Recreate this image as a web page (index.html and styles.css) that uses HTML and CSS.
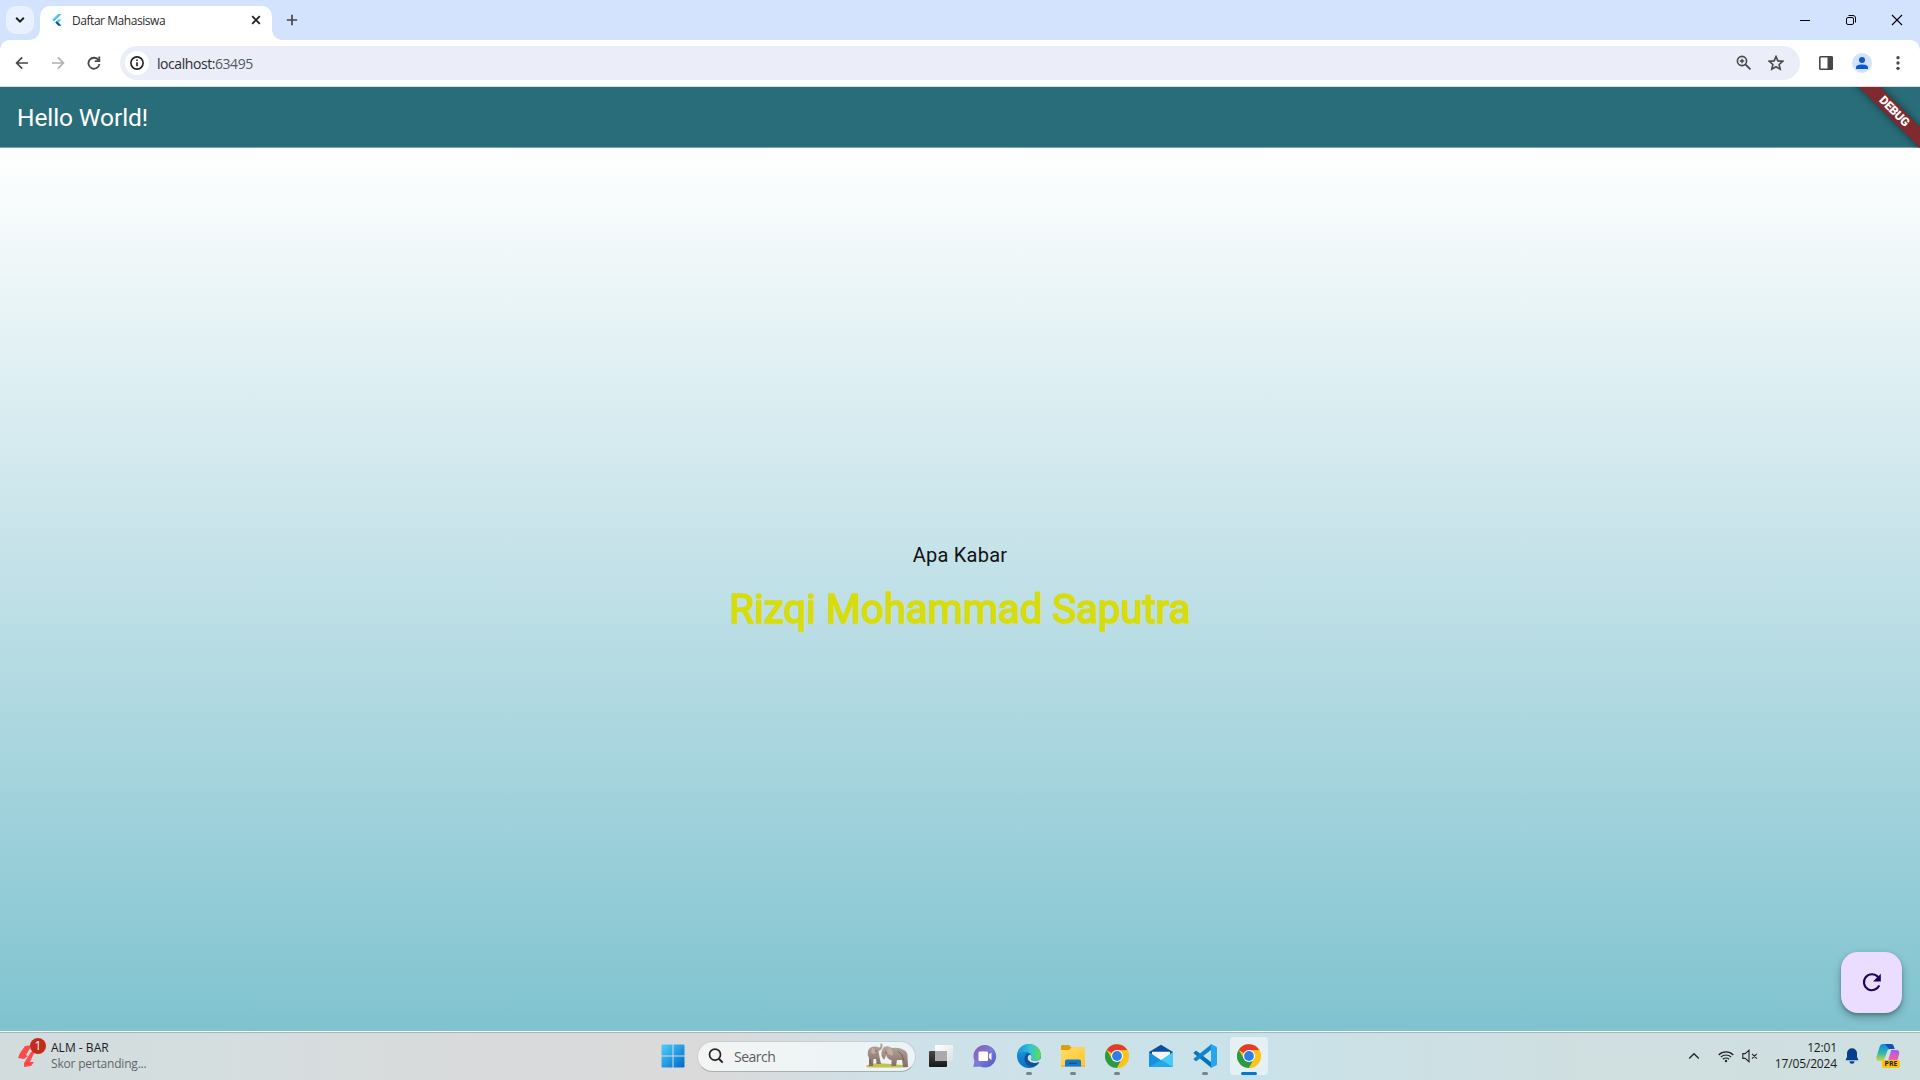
FILE: index.html
```html
<!DOCTYPE html>
<html lang="id">
<head>
<meta charset="utf-8">
<title>Daftar Mahasiswa</title>
<link rel="stylesheet" href="styles.css">
</head>
<body>
<svg class="defs" width="0" height="0">
  <defs>
    <linearGradient id="win" x1="0" y1="0" x2="1" y2="1"><stop offset="0" stop-color="#4fd0fb"/><stop offset="1" stop-color="#0068c8"/></linearGradient>
    <linearGradient id="edgeTop" x1="0" y1="0" x2="1" y2="0"><stop offset="0" stop-color="#1a94dc"/><stop offset=".55" stop-color="#35c3d8"/><stop offset="1" stop-color="#62e03f"/></linearGradient>
    <linearGradient id="edgeBody" x1="0" y1="0" x2="0" y2="1"><stop offset="0" stop-color="#1b9de2"/><stop offset="1" stop-color="#0b72c4"/></linearGradient>
    <linearGradient id="teams" x1="0" y1="0" x2="1" y2="1"><stop offset="0" stop-color="#8f58b5"/><stop offset=".5" stop-color="#7a7bd8"/><stop offset="1" stop-color="#5054be"/></linearGradient>
    <linearGradient id="folder" x1="0" y1="0" x2="1" y2="1"><stop offset="0" stop-color="#ffdc6b"/><stop offset="1" stop-color="#ffc42e"/></linearGradient>
    <linearGradient id="pilotA" x1="0" y1="0" x2="0" y2="1"><stop offset="0" stop-color="#1787e8"/><stop offset=".5" stop-color="#27b6b0"/><stop offset="1" stop-color="#d9d335"/></linearGradient>
    <linearGradient id="pilotB" x1="0" y1="0" x2="0" y2="1"><stop offset="0" stop-color="#a45cf0"/><stop offset=".6" stop-color="#ee5fa8"/><stop offset="1" stop-color="#ff9a62"/></linearGradient>
    <linearGradient id="dark" x1="0" y1="0" x2="0" y2="1"><stop offset="0" stop-color="#474747"/><stop offset="1" stop-color="#181818"/></linearGradient>
    <linearGradient id="pale" x1="0" y1="0" x2="1" y2="1"><stop offset="0" stop-color="#fff"/><stop offset="1" stop-color="#e0e0e0"/></linearGradient>
    <linearGradient id="hide" x1="0" y1="0" x2="0" y2="1"><stop offset="0" stop-color="#b9a69b"/><stop offset="1" stop-color="#826d64"/></linearGradient>
    <symbol id="chrome" viewBox="0 0 24 24">
      <circle cx="12" cy="12" r="12" fill="#fbc116"/>
      <path d="M12 12 1.6 6A12 12 0 0 1 22.4 6.300L12 6.300Z" fill="#e33b2e"/>
      <path d="M1.600 6A12 12 0 0 0 12 24L17 15 12 12 7 14.800Z" fill="#2a9a48"/>
      <path d="M12 6.300H22.400A12 12 0 0 1 12 24L17 15Z" fill="#fcc31a"/>
      <circle cx="12" cy="12" r="6" fill="#fff"/><circle cx="12" cy="12" r="4.900" fill="#2f7de9"/>
    </symbol>
  </defs>
</svg>

<header class="tabstrip">
  <div class="tab-search"><svg width="10" height="8" viewBox="0 0 10 8"><path d="M1.200 1.800 5 5.600 8.800 1.800" fill="none" stroke="#1f1f1f" stroke-width="2"/></svg></div>
  <div class="tab">
    <svg class="favicon" width="10" height="12" viewBox="0 0 10 12"><path d="M6.200 0H9.600L2 7.400.2 5.700Z" fill="#47c5fb"/><path d="M6.200 5.600H9.600L6.600 8.500 4.900 6.900Z" fill="#47c5fb"/><path d="M3.200 8.500 4.900 6.900 9.600 11.800H6.400Z" fill="#00569e"/></svg>
    <span class="tab-title">Daftar Mahasiswa</span>
    <svg class="tab-close" width="10" height="10" viewBox="0 0 10 10"><path d="M1.200 1.200 8.800 8.800M8.800 1.200 1.200 8.800" stroke="#1f1f1f" stroke-width="1.800"/></svg>
  </div>
  <svg class="new-tab" width="12" height="12" viewBox="0 0 12 12"><path d="M6 .8V11.200M.8 6H11.200" stroke="#474747" stroke-width="1.700"/></svg>
  <div class="window-controls">
    <svg width="12" height="12" viewBox="0 0 12 12"><path d="M1 6.500H11" stroke="#000"/></svg>
    <svg width="12" height="12" viewBox="0 0 12 12" fill="none" stroke="#000"><rect x="1.500" y="3.500" width="7" height="7" rx="1.500"/><path d="M3.500 1.500H8a2.500 2.500 0 0 1 2.500 2.500V8.500"/></svg>
    <svg width="12" height="12" viewBox="0 0 12 12"><path d="M1 1 11 11M11 1 1 11" stroke="#000" stroke-width="1.100"/></svg>
  </div>
</header>

<nav class="toolbar">
  <div class="nav-buttons">
    <svg width="14" height="14" viewBox="0 0 14 14" fill="none" stroke="#474747" stroke-width="1.700"><path d="M13 7H2M7.200 1.400 1.600 7 7.200 12.600"/></svg>
    <svg width="14" height="14" viewBox="0 0 14 14" fill="none" stroke="#b0b0b0" stroke-width="1.700"><path d="M1 7H12M6.800 1.400 12.400 7 6.800 12.600"/></svg>
    <svg width="14" height="14" viewBox="0 0 14 14"><path d="M11.600 4.300A5.500 5.500 0 1 0 12.400 8" fill="none" stroke="#474747" stroke-width="1.800"/><path d="M13.200.6V6H7.800V4.200H11.400V.6Z" fill="#474747"/></svg>
  </div>
  <div class="omnibox">
    <div class="site-info"><svg width="14" height="14" viewBox="0 0 14 14"><circle cx="7" cy="7" r="6.100" fill="none" stroke="#1f1f1f" stroke-width="1.600"/><path d="M7 6.200V10.200M7 3.400V5" stroke="#1f1f1f" stroke-width="1.600"/></svg></div>
    <span class="url">localhost:<span class="port">63495</span></span>
    <svg class="zoom-icon" width="16" height="16" viewBox="0 0 16 16" fill="none" stroke="#474747"><circle cx="6" cy="6" r="4.600" stroke-width="1.600"/><path d="M9.400 9.400 14.400 14.400" stroke-width="1.900"/><path d="M6 3.800V8.200M3.800 6H8.200" stroke-width="1.300"/></svg>
    <svg class="star" width="16" height="16" viewBox="0 0 16 16"><path d="M8 1.600 9.900 5.900 14.700 6.300 11.100 9.500 12.200 14.200 8 11.700 3.800 14.200 4.900 9.500 1.300 6.300 6.100 5.900Z" fill="none" stroke="#474747" stroke-width="1.600"/></svg>
  </div>
  <div class="toolbar-actions">
    <svg width="16" height="16" viewBox="0 0 16 16"><rect x="1.800" y="1.800" width="12.400" height="12.400" rx=".8" fill="#fff" stroke="#474747" stroke-width="1.600"/><path d="M9.500 1.500H14.500V14.500H9.500Z" fill="#474747"/></svg>
    <div class="avatar"><svg width="12" height="12" viewBox="0 0 12 12" fill="#0b57d0"><circle cx="6" cy="3" r="3"/><path d="M0 12V10.300C0 8.200 3 7.400 6 7.400S12 8.200 12 10.300V12Z"/></svg></div>
    <svg width="4" height="14" viewBox="0 0 4 14" fill="#474747"><circle cx="2" cy="1.700" r="1.650"/><circle cx="2" cy="7" r="1.650"/><circle cx="2" cy="12.300" r="1.650"/></svg>
  </div>
</nav>

<main class="app">
  <div class="appbar">
    <h1 class="app-title">Hello World!</h1>
    <div class="banner-clip"><div class="banner">DEBUG</div></div>
  </div>
  <section class="content">
    <p class="greeting">Apa Kabar</p>
    <p class="name">Rizqi Mohammad Saputra</p>
    <button class="fab"><svg width="20" height="20" viewBox="0 0 20 20"><path d="M16 4A8 8 0 1 0 17.300 12.400" fill="none" stroke="#21005d" stroke-width="2.100"/><path d="M18.800.8V8.600H11Z" fill="#21005d"/></svg></button>
  </section>
</main>

<footer class="taskbar">
  <div class="widget">
    <div class="widget-icon">
      <svg width="20" height="24" viewBox="0 0 20 24" fill="#fb4b4b"><path d="M7 2 14 1 8 11 10 12 6 15 0 14 2 9Z"/><path d="M13 8 17 7 12 18 16 18 13 22 6 23 6 19Z"/></svg>
      <span class="badge">1</span>
    </div>
    <div class="widget-text"><span class="widget-head">ALM - BAR</span><span class="widget-sub">Skor pertanding...</span></div>
  </div>

  <div class="apps">
    <svg class="start" width="24" height="24" viewBox="0 0 24 24" fill="url(#win)"><path d="M1.500.5H11.500V11.500H.5V1.500A1 1 0 0 1 1.500.5ZM12.500.5H22.500A1 1 0 0 1 23.500 1.500V11.500H12.500ZM.5 12.500H11.500V23.500H1.500A1 1 0 0 1 .5 22.500ZM12.500 12.500H23.500V22.500A1 1 0 0 1 22.500 23.500H12.500Z"/></svg>
    <div class="search">
      <svg width="16" height="16" viewBox="0 0 16 16" fill="none" stroke="#262626"><circle cx="7" cy="6.600" r="5.500" stroke-width="1.700"/><path d="M10.900 10.700 14.700 14.600" stroke-width="2"/></svg>
      <span class="search-label">Search</span>
      <svg class="elephants" width="44" height="26" viewBox="0 0 44 26">
        <path d="M0 23Q5 19.500 18 20.500T42 22.500Q44 25 34 24.500L8 24.500Q0 25 0 23Z" fill="#c3c24a"/>
        <path d="M2 8Q3 4 8 3.500 11 3 13 4.500 15 4 14.500 1.500 14 .5 15 .3 17 .5 16.500 3 16 7 12.500 8 13 11 13.500 14L15 21H10.500L10 16H7.500L7 23H3L3 15Q1 12 2 8Z" fill="url(#hide)"/>
        <path d="M18 4Q22 2 26 5 33 4 38 7 42 9 41.500 14L42 24H37L36 17H31L30 23H25.500L25.500 17Q22 17 20 12 19 15 18.500 17 16 16.500 15.500 13 15 7 18 4Z" fill="url(#hide)"/>
        <path d="M6 5Q10 5 9.500 10 7 12 5 9ZM22 4Q27 5 27 12 23 13 21 9Z" fill="#c0aea4"/>
        <path d="M4 16 4.500 21M32 8Q37 11 38 18M9 7 11 9M19 9 21 10" stroke="#6c5952" stroke-width=".8" fill="none"/>
        <path d="M15 13Q16 16 19 17" stroke="#fff2df" fill="none"/>
      </svg>
    </div>
    <div class="slot first"><svg width="24" height="24" viewBox="0 0 24 24"><rect x="0" y="7" width="18" height="16" rx="1" fill="url(#dark)"/><rect x="6" y="1" width="18" height="16" rx="1" fill="url(#pale)"/><path d="M6 7H18V17H6Z" fill="#aaa"/></svg></div>
    <div class="slot"><svg width="24" height="24" viewBox="0 0 24 24"><path d="M12 1A11.300 11.300 0 1 1 7 22.500L.3 23 1.500 17A11.300 11.300 0 0 1 12 1Z" fill="url(#teams)"/><rect x="5.500" y="7.500" width="9.500" height="9.500" rx="1.200" fill="#fff"/><path d="M16 10.500 18.500 8.500V16L16 14Z" fill="#fff"/></svg></div>
    <div class="slot running"><svg width="24" height="24" viewBox="0 0 24 24"><circle cx="12" cy="12" r="12" fill="url(#edgeBody)"/><path d="M.3 10C1.500 4 6 0 12 0A12 12 0 0 1 24 11C24 15 20.500 17 17 16.800 14 16.500 13.500 15.500 14.400 14.200 16 10 12 7.700 8.500 7.700 5 7.500 1.500 8.700.3 10Z" fill="url(#edgeTop)"/><path d="M10 9.500C6.500 12 6.500 18.500 11 21.500 14.500 24 19.500 22.700 22 18.500 18 20.500 11.500 19.500 10.700 14.500 10.500 12.500 11.500 10.500 13.500 10.800 12.500 9.700 11.500 9.200 10 9.500Z" fill="#174f92"/><path d="M10.700 14.200C10.900 11 12.600 10.600 13.800 10.900 15 12.200 14.800 13.500 14 14.700 13.500 16 15.500 17 18 17 20 17 22 16.200 24 14.500L24 18 22 18.500C18 20 11.500 19 10.700 14.200Z" fill="#cbe1e8"/><path d="M10.700 14.200C11.500 19 18 20 21.500 18.300Q22.500 18 22 18.800C19 21 12 21 10.700 14.200Z" fill="#174f92"/></svg></div>
    <div class="slot running"><svg width="24" height="24" viewBox="0 0 24 24"><path d="M1 1H8L11 4 8 7H0V2A1 1 0 0 1 1 1Z" fill="#dca006"/><path d="M0 6H8L11 3H23A1 1 0 0 1 24 4V22.500H0Z" fill="url(#folder)"/><path d="M0 21.500H24V22.500H0Z" fill="#eaa917"/><path d="M4 22.500V17.500A2 2 0 0 1 6 15.500H18A2 2 0 0 1 20 17.500V22.500Z" fill="#1477cc"/><path d="M8 18.500H16V20H8Z" fill="#0758a4"/></svg></div>
    <div class="slot running"><svg width="24" height="24"><use href="#chrome"/></svg></div>
    <div class="slot"><svg width="24" height="24" viewBox="0 0 24 24"><path d="M0 8 12 .8 24 8V13H0Z" fill="#0c4f9f"/><path d="M3 7.800H21V14L12 18 3 14Z" fill="#f5f5f5"/><path d="M0 8 14 17.500 24 23H0Z" fill="#1591df"/><path d="M24 8V23L12 16Z" fill="#46caf7"/><path d="M0 23 12.500 16 24 23Z" fill="#25a8e9"/></svg></div>
    <div class="slot running"><svg width="24" height="24" viewBox="0 0 24 24"><path d="M1 8.300 2.500 7Q3 6.600 3.700 7L18 18V23.500L.8 9.500Q.2 8.800 1 8.300Z" fill="#0873b9"/><path d="M1 15.700 2.500 17Q3 17.400 3.700 17L18 6V.500L.8 14.500Q.2 15.200 1 15.700Z" fill="#1185cd"/><path d="M17 .500Q17.500 0 18.500.300L23 2.500Q24 3 24 4V20Q24 21 23 21.500L18.500 23.700Q17.500 24 17 23.500Q18 23.500 18 22V2Q18 .5 17 .5Z" fill="#27a5ef"/></svg></div>
    <div class="slot running active"><svg width="24" height="24"><use href="#chrome"/></svg></div>
  </div>

  <div class="tray">
    <svg class="chevron" width="12" height="8" viewBox="0 0 12 8"><path d="M1.200 6.500 6 1.700 10.800 6.500" fill="none" stroke="#222" stroke-width="1.300"/></svg>
    <svg class="wifi" width="16" height="13" viewBox="0 0 16 13" fill="none" stroke="#222" stroke-width="1.200"><path d="M.7 5A10.300 10.300 0 0 1 15.300 5M2.800 7.200A7.300 7.300 0 0 1 13.200 7.200M4.900 9.300A4.400 4.400 0 0 1 11.100 9.300"/><circle cx="8" cy="11" r="1.200" fill="#222" stroke="none"/></svg>
    <svg class="mute" width="16" height="14" viewBox="0 0 16 14" fill="none" stroke="#222" stroke-width="1.100"><path d="M.8 4.600H3.200L7 1.200V12.800L3.200 9.400H.8ZM10 4.800 14.800 9.600M14.800 4.800 10 9.600"/></svg>
    <div class="clock"><span>12:01</span><span>17/05/2024</span></div>
    <svg class="bell" width="14" height="16" viewBox="0 0 14 16" fill="#043f8e"><path d="M7 .3A5 5 0 0 1 12 5.300V9L13.500 12.300H.5L2 9V5.300A5 5 0 0 1 7 .3ZM4.500 13.300H9.500A2.500 2.500 0 0 1 4.500 13.300Z"/></svg>
    <div class="copilot">
      <svg width="24" height="22" viewBox="0 0 24 22"><path d="M7 0H15Q17 0 17.700 2L18.500 5H14Q12 5 11.300 7L8.500 15Q8 17 5.500 17H3Q0 17 .5 13L3.500 3Q4.500 0 7 0Z" fill="url(#pilotA)"/><path d="M9 0H15Q17 0 17.700 2L18.500 5H13Z" fill="#154fb5"/><path d="M15 6H20Q24 6 23.200 10L21 18Q20 21 17 21H8Q11 20 12 17L14 10Q15 8 15 6Z" fill="url(#pilotB)"/></svg>
      <span class="pre">PRE</span>
    </div>
  </div>
</footer>
</body>
</html>
```
FILE: styles.css
```css
* { box-sizing: border-box; }
body {
  margin: 0;
  width: 1920px;
  height: 1080px;
  overflow: hidden;
  display: flex;
  flex-direction: column;
  background: #d3e3fd;
  font-family: "Open Sans", "Noto Sans", sans-serif;
}
svg { display: block; flex: none; }
.defs { position: absolute; }

/* Browser chrome */
.tabstrip {
  height: 40px;
  display: flex;
  align-items: flex-start;
  padding: 6px 17px 0 6px;
}
.tab-search {
  width: 28px;
  height: 28px;
  border-radius: 10px;
  background: #e9f0fe;
  display: grid;
  place-items: center;
}
.tab {
  position: relative;
  width: 232px;
  height: 34px;
  margin-left: 6px;
  padding: 0 11px 6px 12px;
  border-radius: 10px 10px 0 0;
  background: #fff;
  display: flex;
  align-items: center;
}
.tab::before, .tab::after {
  content: "";
  position: absolute;
  bottom: 0;
  width: 10px;
  height: 10px;
}
.tab::before { left: -10px; background: radial-gradient(circle at 0 0, transparent 9.500px, #fff 10px); }
.tab::after { right: -10px; background: radial-gradient(circle at 100% 0, transparent 9.500px, #fff 10px); }
.tab-title {
  margin: 1px auto 0 10px;
  font-size: 12px;
  letter-spacing: -.45px;
  color: #2c2c2c;
  white-space: nowrap;
}
.new-tab { margin: 8px 0 0 14px; }
.window-controls {
  margin: 8px 0 0 auto;
  display: flex;
  gap: 34px;
}
.toolbar {
  height: 47px;
  padding: 6px 20px 0 15px;
  border-bottom: 1px solid #dadce0;
  border-radius: 10px 10px 0 0;
  background: #fff;
  display: flex;
  align-items: flex-start;
}
.nav-buttons { display: flex; gap: 22px; padding-top: 10px; }
.omnibox {
  width: 1680px;
  height: 34px;
  margin-left: 19px;
  padding: 0 16px 0 5px;
  border-radius: 17px;
  background: #ebeef8;
  display: flex;
  align-items: center;
}
.site-info {
  width: 24px;
  height: 24px;
  border-radius: 50%;
  background: #fff;
  display: grid;
  place-items: center;
}
.url {
  margin: 0 auto 0 8px;
  font-size: 14px;
  letter-spacing: -.44px;
  color: #2c2c2c;
}
.port { color: #555960; }
.star { margin-left: 16px; }
.toolbar-actions { display: flex; align-items: center; height: 34px; margin-left: auto; }
.avatar {
  width: 20px;
  height: 20px;
  margin: 0 24px 0 18px;
  border-radius: 50%;
  background: #d3e3fd;
  display: grid;
  place-items: center;
}

/* App page */
.app {
  height: 944px;
  display: flex;
  flex-direction: column;
  font-family: Roboto, sans-serif;
}
.appbar {
  position: relative;
  height: 61px;
  padding-left: 17px;
  background: #286d79;
  border-bottom: 1px solid #7fa9b0;
  display: flex;
  align-items: center;
}
.app-title {
  margin: 0;
  font-size: 24.500px;
  line-height: 29px;
  font-weight: 400;
  letter-spacing: -.1px;
  color: #fff;
}
.banner-clip {
  position: absolute;
  top: 0;
  right: 0;
  width: 76px;
  height: 61px;
  overflow: hidden;
  z-index: 1;
}
.banner {
  position: absolute;
  left: -10px;
  top: 17px;
  width: 120px;
  height: 15px;
  background: #7f2a2f;
  box-shadow: 0 0 7px rgba(0, 0, 0, .5);
  color: #fff;
  font-size: 12px;
  line-height: 15px;
  font-weight: 900;
  letter-spacing: -.25px;
  text-align: center;
  transform: rotate(45deg);
}
.content {
  position: relative;
  flex: 1;
  padding-bottom: 4px;
  background: linear-gradient(#fff 0%, #c0e0e7 50%, #7fc3cf 100%);
  display: flex;
  flex-direction: column;
  align-items: center;
  justify-content: center;
}
.greeting { margin: 0; font-size: 20px; line-height: 30px; letter-spacing: .25px; color: #101214; }
.name {
  margin: 14px 0 0;
  font-size: 40px;
  line-height: 52px;
  font-weight: 400;
  letter-spacing: .05px;
  color: #d8dc0a;
  -webkit-text-stroke: 1.700px #d8dc0a;
}
.fab {
  position: absolute;
  right: 18px;
  bottom: 18px;
  width: 61px;
  height: 61px;
  border: 0;
  border-radius: 17px;
  background: #eaddff;
  box-shadow: 0 4px 8px rgba(0, 0, 0, .28), 0 2px 3px rgba(0, 0, 0, .18);
  display: grid;
  place-items: center;
}

/* Desktop taskbar */
.taskbar {
  height: 49px;
  border-top: 1px solid #fff;
  background: linear-gradient(90deg, #d3dcdd 0, #d5dedf 200px, #d9dadb 500px, #dadadb 720px, #cee1e8 900px, #c9e2e9 1250px, #d0dfe0 1600px, #cfe0e0 1920px);
  box-shadow: inset 0 1px #a9b5b7;
  display: flex;
  align-items: center;
}
.widget { width: 661px; display: flex; padding-left: 18px; align-items: center; }
.widget-icon { position: relative; width: 33px; height: 30px; padding-top: 3px; }
.badge {
  position: absolute;
  left: 12px;
  top: -3px;
  width: 16px;
  height: 16px;
  border-radius: 50%;
  background: #c42b1c;
  color: #fff;
  font-size: 12px;
  line-height: 16px;
  text-align: center;
}
.widget-text { display: flex; flex-direction: column; font-size: 12px; line-height: 16px; }
.widget-head { color: #1b1b1b; letter-spacing: .02px; }
.widget-sub { color: #5f6566; letter-spacing: -.2px; }
.apps { display: flex; align-items: center; }
.search {
  width: 219px;
  height: 31px;
  margin-left: 12px;
  padding: 0 5px 0 10px;
  border-radius: 16px;
  border: 1px solid #c6cfd2;
  border-bottom-color: #a6afb2;
  background: linear-gradient(90deg, #f3f4f4, #eaf4f7);
  display: flex;
  align-items: center;
}
.search-label { margin: 0 auto 0 10px; font-size: 14px; letter-spacing: -.5px; color: #5b5d5e; }
.slot {
  position: relative;
  width: 38px;
  height: 38px;
  margin-right: 6px;
  display: grid;
  place-items: center;
}
.slot.first { margin-left: 6px; }
.slot.running::after {
  content: "";
  position: absolute;
  left: 16px;
  bottom: 0;
  width: 6px;
  height: 3px;
  border-radius: 2px;
  background: #7b8385;
}
.slot.active { margin-right: 0; border-radius: 4px; background: #e5f0f4; }
.slot.active::after { left: 11px; width: 16px; background: #0078d4; }
.tray { margin-left: auto; padding-right: 20px; display: flex; align-items: center; }
.wifi { margin-left: 18px; }
.mute { margin-left: 8px; }
.clock {
  width: 79px;
  display: flex;
  flex-direction: column;
  align-items: flex-end;
  font-size: 12px;
  line-height: 16px;
  letter-spacing: -.15px;
  color: #1b1b1b;
}
.bell { margin-left: 8px; }
.copilot { position: relative; width: 24px; height: 24px; margin-left: 17px; }
.pre {
  position: absolute;
  left: 6px;
  top: 16px;
  width: 18px;
  height: 8px;
  border-radius: 2px;
  background: #ffc20e;
  color: #222;
  font-size: 7px;
  line-height: 8px;
  font-weight: 700;
  text-align: center;
}
```
